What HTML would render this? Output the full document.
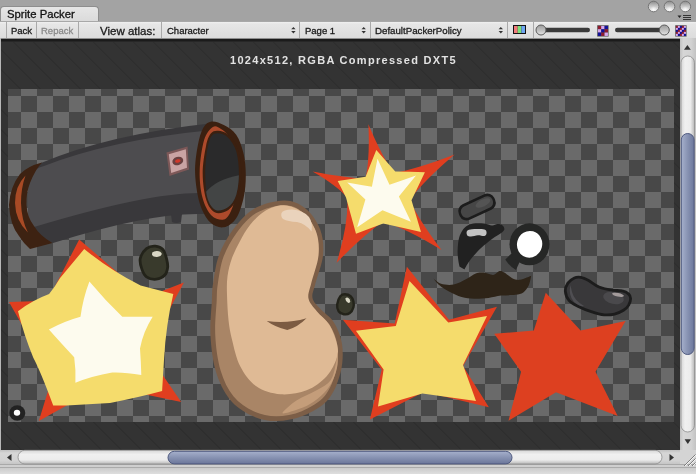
<!DOCTYPE html>
<html><head><meta charset="utf-8">
<style>
html,body{margin:0;padding:0;width:696px;height:474px;overflow:hidden;background:#a4a4a4;font-family:"Liberation Sans",sans-serif;}
.abs{position:absolute;}
.tt,#tabtxt{will-change:transform;}
#top{left:0;top:0;width:696px;height:21px;background:#a3a3a3;}
#tab{left:0;top:5.5px;width:99px;height:16.5px;background:linear-gradient(#e6e6e6,#dadada);border:1px solid #8e8e8e;border-bottom:none;border-radius:4px 4px 0 0;box-sizing:border-box;}
#tabtxt{left:7px;top:8px;font-size:11.3px;color:#111;-webkit-text-stroke:0.3px #111;}
#toolbar{left:0;top:21px;width:696px;height:17px;background:linear-gradient(#a8a8a8 0,#a8a8a8 1px,#f0f0f0 1px,#e6e6e6 3px,#dcdcdc 100%);box-sizing:border-box;}
.sep{position:absolute;top:22px;width:1px;height:16px;background:#a9a9a9;}
.tt{position:absolute;font-size:9.5px;color:#1a1a1a;white-space:nowrap;-webkit-text-stroke:0.3px currentColor;}
#content{left:0;top:38px;width:696px;height:436px;}
</style></head><body>
<div class="abs" id="top"></div>
<div class="abs" id="tab"></div>
<div class="abs" id="tabtxt">Sprite Packer</div>
<div class="abs" id="toolbar"></div>
<div class="sep" style="left:6px"></div>
<div class="sep" style="left:36px"></div>
<div class="sep" style="left:78px"></div>
<div class="sep" style="left:161px"></div>
<div class="sep" style="left:299px"></div>
<div class="sep" style="left:370px"></div>
<div class="sep" style="left:507px"></div>
<div class="sep" style="left:533px"></div>
<div class="tt" style="left:11px;top:25px;">Pack</div>
<div class="tt" style="left:41px;top:25px;color:#8a8a8a">Repack</div>
<div class="tt" style="left:100px;top:25px;font-size:11.5px;">View atlas:</div>
<div class="tt" style="left:167px;top:25px;">Character</div>
<div class="tt" style="left:305px;top:25px;">Page 1</div>
<div class="tt" style="left:375px;top:25px;font-size:9.7px;">DefaultPackerPolicy</div>


<svg class="abs" style="left:0;top:0" width="696" height="40" viewBox="0 0 696 40">
<defs>
<linearGradient id="btn" x1="0" y1="0" x2="0" y2="1"><stop offset="0" stop-color="#8a8a8a"/><stop offset="0.45" stop-color="#c4c4c4"/><stop offset="1" stop-color="#f6f6f6"/></linearGradient><radialGradient id="btnhl" cx="50%" cy="80%" r="50%"><stop offset="0" stop-color="#ffffff" stop-opacity="0.9"/><stop offset="1" stop-color="#ffffff" stop-opacity="0"/></radialGradient>
<linearGradient id="knob" x1="0" y1="0" x2="0" y2="1"><stop offset="0" stop-color="#9c9c9c"/><stop offset="0.6" stop-color="#c4c4c4"/><stop offset="1" stop-color="#e4e4e4"/></linearGradient>
</defs>
<g fill="#333">
<path d="M291.2 29.3 L293.4 27 L295.6 29.3 Z"/><path d="M291.2 31 L293.4 33.6 L295.6 31 Z"/>
<path d="M361.5 29.3 L363.7 27 L365.9 29.3 Z"/><path d="M361.5 31 L363.7 33.6 L365.9 31 Z"/>
<path d="M498.6 29.3 L500.8 27 L503 29.3 Z"/><path d="M498.6 31 L500.8 33.6 L503 31 Z"/>
</g>
<rect x="513" y="25" width="13" height="9" fill="#111"/>
<rect x="514" y="26" width="3.7" height="7" fill="#f07a7a"/>
<rect x="517.7" y="26" width="3.7" height="7" fill="#7de07a"/>
<rect x="521.4" y="26" width="3.6" height="7" fill="#6fa6f2"/>
<rect x="541" y="27.8" width="49" height="4.4" rx="2.2" fill="#3a3a3a"/>
<circle cx="541" cy="30" r="5" fill="url(#knob)" stroke="#5a5a5a" stroke-width="1"/>
<rect x="615" y="27.8" width="49" height="4.4" rx="2.2" fill="#3a3a3a"/>
<circle cx="664.3" cy="30" r="5" fill="url(#knob)" stroke="#5a5a5a" stroke-width="1"/>
<rect x="597.2" y="25.2" width="11.4" height="11.4" fill="#5a5a5a"/><rect x="597.90" y="25.90" width="3.35" height="3.35" fill="#8e1a2c"/><rect x="601.23" y="25.90" width="3.35" height="3.35" fill="#d6a6ee"/><rect x="604.57" y="25.90" width="3.35" height="3.35" fill="#12109a"/><rect x="597.90" y="29.23" width="3.35" height="3.35" fill="#d6a6ee"/><rect x="601.23" y="29.23" width="3.35" height="3.35" fill="#12109a"/><rect x="604.57" y="29.23" width="3.35" height="3.35" fill="#8e1a2c"/><rect x="597.90" y="32.57" width="3.35" height="3.35" fill="#12109a"/><rect x="601.23" y="32.57" width="3.35" height="3.35" fill="#8e1a2c"/><rect x="604.57" y="32.57" width="3.35" height="3.35" fill="#d6a6ee"/>
<rect x="675.2" y="25.2" width="11.4" height="11.4" fill="#5a5a5a"/><rect x="675.90" y="25.90" width="2.02" height="2.02" fill="#8e1a2c"/><rect x="677.90" y="25.90" width="2.02" height="2.02" fill="#d6a6ee"/><rect x="679.90" y="25.90" width="2.02" height="2.02" fill="#12109a"/><rect x="681.90" y="25.90" width="2.02" height="2.02" fill="#8e1a2c"/><rect x="683.90" y="25.90" width="2.02" height="2.02" fill="#d6a6ee"/><rect x="675.90" y="27.90" width="2.02" height="2.02" fill="#d6a6ee"/><rect x="677.90" y="27.90" width="2.02" height="2.02" fill="#12109a"/><rect x="679.90" y="27.90" width="2.02" height="2.02" fill="#8e1a2c"/><rect x="681.90" y="27.90" width="2.02" height="2.02" fill="#d6a6ee"/><rect x="683.90" y="27.90" width="2.02" height="2.02" fill="#12109a"/><rect x="675.90" y="29.90" width="2.02" height="2.02" fill="#12109a"/><rect x="677.90" y="29.90" width="2.02" height="2.02" fill="#8e1a2c"/><rect x="679.90" y="29.90" width="2.02" height="2.02" fill="#d6a6ee"/><rect x="681.90" y="29.90" width="2.02" height="2.02" fill="#12109a"/><rect x="683.90" y="29.90" width="2.02" height="2.02" fill="#8e1a2c"/><rect x="675.90" y="31.90" width="2.02" height="2.02" fill="#8e1a2c"/><rect x="677.90" y="31.90" width="2.02" height="2.02" fill="#d6a6ee"/><rect x="679.90" y="31.90" width="2.02" height="2.02" fill="#12109a"/><rect x="681.90" y="31.90" width="2.02" height="2.02" fill="#8e1a2c"/><rect x="683.90" y="31.90" width="2.02" height="2.02" fill="#d6a6ee"/><rect x="675.90" y="33.90" width="2.02" height="2.02" fill="#d6a6ee"/><rect x="677.90" y="33.90" width="2.02" height="2.02" fill="#12109a"/><rect x="679.90" y="33.90" width="2.02" height="2.02" fill="#8e1a2c"/><rect x="681.90" y="33.90" width="2.02" height="2.02" fill="#d6a6ee"/><rect x="683.90" y="33.90" width="2.02" height="2.02" fill="#12109a"/>
<circle cx="653.6" cy="6.5" r="5.3" fill="url(#btn)" stroke="#6e6e6e" stroke-width="0.9"/><circle cx="653.6" cy="7.5" r="3.5" fill="url(#btnhl)"/>
<circle cx="669.5" cy="6.5" r="5.3" fill="url(#btn)" stroke="#6e6e6e" stroke-width="0.9"/><circle cx="669.5" cy="7.5" r="3.5" fill="url(#btnhl)"/>
<circle cx="685.3" cy="6.5" r="5.3" fill="url(#btn)" stroke="#6e6e6e" stroke-width="0.9"/><circle cx="685.3" cy="7.5" r="3.5" fill="url(#btnhl)"/>
<path d="M677.5 15.5 L681.5 15.5 L679.5 18 Z" fill="#222"/>
<rect x="683" y="15" width="8" height="1" fill="#333"/>
<rect x="683" y="17" width="8" height="1" fill="#333"/>
<rect x="683" y="19" width="8" height="1" fill="#333"/>
</svg>
<svg class="abs" style="left:0;top:0" width="696" height="474" viewBox="0 0 696 474">
<defs>
<pattern id="chk" patternUnits="userSpaceOnUse" x="5" y="96" width="32" height="32">
<rect width="32" height="32" fill="#484848"/>
<rect width="16" height="16" fill="#6a6a6a"/>
<rect x="16" y="16" width="16" height="16" fill="#6a6a6a"/>
</pattern>
<pattern id="stripes" patternUnits="userSpaceOnUse" width="14.142" height="14.142" patternTransform="rotate(-45)">
<rect width="14.2" height="14.2" fill="#333"/>
<rect x="7.5" width="1" height="14.2" fill="#2c2c2c"/>
</pattern>
</defs>
<rect x="0" y="38" width="696" height="412" fill="#b8b8b8"/>
<rect x="1" y="39" width="679" height="411" fill="url(#stripes)"/>
<defs><linearGradient id="topsh" x1="0" y1="0" x2="0" y2="1"><stop offset="0" stop-color="#151515"/><stop offset="0.35" stop-color="#222" stop-opacity="0.7"/><stop offset="1" stop-color="#333" stop-opacity="0"/></linearGradient></defs><rect x="1" y="38" width="679" height="1" fill="#8e8e8e"/><rect x="1" y="39" width="679" height="2" fill="#1b1b1b"/><rect x="1" y="41" width="679" height="1" fill="#272727"/>
<rect x="8" y="89" width="666" height="333" fill="url(#chk)"/>
<!-- sprites -->
<g id="sprites">
<!-- cannon -->
<path d="M30 170 Q41 163 41 163 Q110 134 214 123 L204 214 Q150 212 53 243 L30 235 Z" fill="#39383b"/>
<path d="M28 175 Q36 168 44 166 Q110 140 212 130 L202 193 Q150 192 34 227 L28 222 Z" fill="#4d4c4f"/>
<path d="M171 214 L182 214 L181 222 Q176 224 172 222 Z" fill="#39383b"/>
<path d="M42 162.5 Q28 166 20 174 Q10 187 9 205 Q10 225 19 236 Q24 244 30 249 L52.5 243 Q40 236 34 226 Q27 217 26.5 205 Q26 193 30 183 Q35 170 42 162.5 Z" fill="#3d2212"/>
<path d="M25.5 175.5 Q15 186 15 203 Q15.5 221 27.9 232.4 Q21.5 220 21 203 Q21 188 25.5 175.5 Z" fill="#a84a25"/>
<path d="M211.5 121.5 C214.9 121.0 219.7 122.9 223.8 125.1 C227.9 127.3 232.9 129.9 236.2 134.7 C239.5 139.5 242.0 147.0 243.6 153.8 C245.2 160.7 245.8 168.5 245.8 175.8 C245.8 183.1 245.2 190.6 243.6 197.7 C242.0 204.8 239.5 213.3 236.2 218.2 C232.9 223.1 228.2 226.6 223.8 227.3 C219.5 228.0 214.1 226.3 210.1 222.3 C206.1 218.3 202.2 211.4 199.7 203.2 C197.2 195.0 195.4 182.6 195.1 173.0 C194.8 163.4 196.4 153.1 197.8 145.6 C199.2 138.1 201.0 131.8 203.3 127.8 C205.6 123.8 208.1 122.0 211.5 121.5 Z" fill="#3b2010"/>
<path d="M212.9 127.0 C215.7 125.2 218.3 127.3 221.0 129.0 C223.7 130.7 226.6 132.7 229.0 137.0 C231.4 141.3 234.1 148.7 235.5 155.0 C236.9 161.3 237.5 168.2 237.5 175.0 C237.5 181.8 236.6 190.0 235.5 196.0 C234.4 202.0 232.9 207.1 231.0 211.0 C229.1 214.9 227.1 218.8 223.8 219.6 C220.6 220.3 215.1 219.2 211.5 215.5 C207.9 211.8 204.5 205.2 202.5 197.7 C200.5 190.2 199.4 179.9 199.7 170.3 C200.0 160.7 201.9 147.3 204.1 140.1 C206.3 132.9 210.1 128.8 212.9 127.0 Z" fill="#ad4a2b"/>
<path d="M218.2 130.7 C221.1 130.9 225.2 131.8 228.4 134.9 C231.7 137.9 235.7 142.7 237.9 149.1 C240.0 155.5 241.5 165.5 241.4 173.5 C241.4 181.5 239.7 191.1 237.5 197.1 C235.3 203.2 232.1 207.3 228.4 209.9 C224.6 212.4 218.9 214.2 215.2 212.6 C211.6 210.9 208.4 206.5 206.3 200.0 C204.2 193.5 202.7 182.6 202.7 173.6 C202.6 164.6 204.6 152.9 206.0 146.2 C207.3 139.5 208.7 136.1 210.8 133.5 C212.8 130.9 215.3 130.5 218.2 130.7 Z" fill="#3b2010"/>
<clipPath id="mouthclip"><path d="M218.4 133.3 C221.1 133.5 224.9 134.4 227.9 137.4 C230.9 140.4 234.4 145.2 236.2 151.1 C238.0 157.0 238.9 165.7 238.9 173.0 C238.9 180.3 238.0 189.2 236.2 194.9 C234.4 200.6 231.3 204.8 227.9 207.3 C224.5 209.8 219.0 211.6 215.6 210.0 C212.2 208.4 209.1 203.9 207.4 197.7 C205.7 191.5 205.2 181.2 205.2 173.0 C205.2 164.8 206.3 154.6 207.4 148.4 C208.5 142.2 209.7 138.5 211.5 136.0 C213.3 133.5 215.7 133.1 218.4 133.3 Z"/></clipPath>
<path d="M218.4 133.3 C221.1 133.5 224.9 134.4 227.9 137.4 C230.9 140.4 234.4 145.2 236.2 151.1 C238.0 157.0 238.9 165.7 238.9 173.0 C238.9 180.3 238.0 189.2 236.2 194.9 C234.4 200.6 231.3 204.8 227.9 207.3 C224.5 209.8 219.0 211.6 215.6 210.0 C212.2 208.4 209.1 203.9 207.4 197.7 C205.7 191.5 205.2 181.2 205.2 173.0 C205.2 164.8 206.3 154.6 207.4 148.4 C208.5 142.2 209.7 138.5 211.5 136.0 C213.3 133.5 215.7 133.1 218.4 133.3 Z" fill="#2a2a2b"/>
<path d="M205 193 Q216 179 240 175 L240 215 L205 215 Z" fill="#434545" clip-path="url(#mouthclip)"/>
<path d="M166.5 152.5 L187.5 146.5 L189 169.5 L169.5 176 Z" fill="#7d5858"/>
<path d="M168.8 154.2 L185.8 149.3 L187 167.8 L171.2 173 Z" fill="#c9a3a3"/>
<ellipse cx="177.8" cy="161" rx="5.5" ry="4.2" transform="rotate(-15 177.8 161)" fill="#6a4040"/>
<ellipse cx="177.8" cy="161" rx="2.8" ry="1.7" transform="rotate(-15 177.8 161)" fill="#d0382a"/>

<!-- big explosion -->
<path d="M79.2 239.4 L146.2 297.2 L183.9 282.5 L146.7 351.7 L181.2 402.1 L102.6 385.5 L38.8 420.9 L52 378 L9 302.1 L47.5 300.8 Z" fill="#e03e1f"/>
<path d="M84.2 249 Q110 270 140.6 285.6 L173.3 294.1 Q166 325 164.1 358 L162.1 391 Q140 397 110 403 L66.5 405.4 L53.2 405.4 Q40 370 33.3 357.7 Q24 335 18 311.2 Q33 300 49.1 294.1 Q55 287 60.1 278.1 Z" fill="#f5dc6c"/>
<path d="M89.4 281.4 Q105 300 122.3 316.8 L152.7 316.8 Q143 332 140 348.5 Q141 362 141.3 375 Q125 372 112.2 372.5 Q92 376 75.4 382.7 Q76 370 74.2 357.3 Q60 342 48.9 329.5 Q65 321 80.5 316.8 Q83 298 89.4 281.4 Z" fill="#fdfbee"/>
<!-- dark blobs -->
<path d="M146.5 248.6 C149.0 246.6 152.5 245.9 155.3 246.1 C158.0 246.3 161.2 247.4 163.1 249.6 C165.0 251.8 165.9 256.5 166.7 259.4 C167.4 262.3 167.9 264.4 167.7 267.0 C167.4 269.5 166.9 272.8 165.0 274.8 C163.1 276.9 159.4 278.9 156.3 279.2 C153.2 279.5 148.9 278.5 146.5 276.8 C144.1 275.1 142.8 272.0 141.8 268.9 C140.7 265.8 139.5 261.7 140.3 258.3 C141.1 254.9 144.0 250.6 146.5 248.6 Z" fill="#393a2c" stroke="#23231a" stroke-width="2.8"/>
<path d="M152.2 252.5 Q154 250.8 157 250.9 Q161 251 161.8 253.8 Q161.5 256.5 157 256.9 Q153 257 152 255 Z" fill="#d9d7c5"/>
<path d="M340.5 296.1 C341.7 294.4 343.2 294.2 344.9 294.2 C346.6 294.2 349.2 294.9 350.6 296.1 C352.0 297.3 352.9 299.5 353.4 301.4 C353.8 303.3 354.0 305.4 353.4 307.3 C352.8 309.3 351.4 311.9 349.8 313.0 C348.2 314.2 345.7 314.5 343.8 314.2 C342.0 313.9 339.7 312.8 338.6 311.2 C337.5 309.5 336.9 306.9 337.2 304.4 C337.5 301.9 339.2 297.8 340.5 296.1 Z" fill="#393a2c" stroke="#23231a" stroke-width="2.4"/>
<path d="M345.3 298.5 Q346.5 297.2 348 297.8 Q350.3 299 350.3 301.8 Q349.8 303.2 348 302.8 Q345.5 301.5 345.3 298.5 Z" fill="#d9d7c5"/>
<ellipse cx="17.3" cy="413" rx="8" ry="7.8" fill="#222"/>
<ellipse cx="17" cy="412.7" rx="3.2" ry="3" fill="#fff"/>

<!-- bean -->
<path d="M283.9 200.5 C292.5 200.4 299.4 203.6 305.5 208.5 C311.6 213.4 317.4 222.0 320.3 229.8 C323.2 237.6 323.8 246.5 323.0 255.4 C322.2 264.3 317.2 276.1 315.5 283.2 C313.8 290.3 311.7 293.8 312.5 298.0 C313.3 302.2 316.6 304.6 320.2 308.7 C323.8 312.8 330.2 316.4 333.9 322.4 C337.5 328.3 341.0 336.2 342.1 344.4 C343.2 352.6 343.0 362.7 340.7 371.8 C338.4 380.9 334.6 391.9 328.4 399.2 C322.2 406.5 312.4 412.0 303.7 415.6 C295.0 419.2 285.0 421.1 276.3 421.1 C267.6 421.1 259.4 419.2 251.6 415.6 C243.8 412.0 235.6 406.5 229.7 399.2 C223.8 391.9 219.2 382.3 216.0 371.8 C212.8 361.3 211.2 348.1 210.5 336.1 C209.8 324.1 211.5 308.8 211.9 300.0 C212.3 291.2 211.9 290.6 213.1 283.2 C214.3 275.8 215.6 264.3 218.9 255.4 C222.2 246.5 227.1 237.6 232.9 229.8 C238.7 222.1 245.3 213.8 253.8 208.9 C262.3 204.0 275.3 200.6 283.9 200.5 Z" fill="#7c5e47"/>
<path d="M283.9 205.3 C291.7 205.2 297.2 207.9 302.5 212.2 C307.8 216.6 313.2 224.4 315.8 231.5 C318.4 238.6 319.0 246.5 318.2 255.0 C317.4 263.4 312.6 274.7 310.8 282.1 C309.1 289.4 306.8 293.9 307.8 298.9 C308.7 303.8 312.9 307.5 316.6 311.9 C320.3 316.2 326.3 319.4 329.8 324.9 C333.3 330.4 336.3 337.4 337.3 345.1 C338.4 352.7 338.1 362.1 336.0 370.6 C333.9 379.1 330.4 389.3 324.7 396.1 C319.0 402.9 309.9 407.8 301.8 411.2 C293.8 414.5 284.3 416.3 276.3 416.3 C268.3 416.3 260.8 414.6 253.6 411.3 C246.5 407.9 238.9 403.0 233.4 396.2 C227.9 389.4 223.6 380.5 220.6 370.4 C217.6 360.3 215.9 347.5 215.3 335.8 C214.6 324.1 216.3 308.9 216.7 300.2 C217.1 291.6 216.7 291.1 217.8 283.9 C219.0 276.7 220.3 265.6 223.4 257.1 C226.6 248.5 231.3 240.0 236.7 232.7 C242.2 225.3 248.3 217.6 256.2 213.1 C264.1 208.5 276.2 205.4 283.9 205.3 Z" fill="#a98566"/>
<path d="M283.9 205.3 C290.2 205.6 297.6 208.4 303.0 212.8 C308.4 217.2 313.4 224.4 316.0 231.5 C318.6 238.6 319.3 246.8 318.5 255.4 C317.7 264.0 313.0 275.8 311.3 283.0 C309.6 290.2 307.6 293.8 308.5 298.5 C309.4 303.2 313.5 307.1 317.0 311.5 C320.5 315.9 326.2 319.6 329.5 325.0 C332.8 330.4 335.8 338.5 337.0 344.0 C338.2 349.5 338.5 352.7 336.8 358.1 C335.1 363.5 331.7 370.8 326.7 376.2 C321.7 381.6 314.3 387.3 306.6 390.3 C298.9 393.3 288.8 395.0 280.4 394.3 C272.0 393.6 263.0 391.0 256.3 386.3 C249.6 381.6 244.2 373.9 240.2 366.2 C236.2 358.5 234.0 347.7 232.1 340.0 C230.2 332.3 229.3 327.5 228.5 320.0 C227.7 312.5 227.2 302.3 227.0 295.0 C226.8 287.7 226.7 282.5 227.5 276.3 C228.3 270.1 229.9 263.8 232.0 258.0 C234.1 252.2 236.8 246.9 239.8 241.4 C242.8 235.9 245.8 230.1 250.0 225.0 C254.2 219.9 259.4 214.3 265.0 211.0 C270.6 207.7 277.6 205.0 283.9 205.3 Z" fill="#dfba95"/>
<path d="M337.5 352.0 C337.8 352.1 338.2 360.3 337.5 365.0 C336.8 369.7 335.2 375.3 333.0 380.0 C330.8 384.7 327.8 389.0 324.0 393.0 C320.2 397.0 314.7 401.2 310.0 404.0 C305.3 406.8 300.6 408.5 296.0 410.0 C291.4 411.5 282.3 414.6 282.4 413.0 C282.5 411.4 290.8 404.2 296.5 400.4 C302.2 396.6 310.9 393.7 316.6 390.3 C322.3 386.9 327.5 384.6 330.7 380.2 C333.9 375.8 334.7 368.8 335.8 364.1 C336.9 359.4 337.2 351.9 337.5 352.0 Z" fill="#c49d7a"/>
<path d="M281.5 213 Q283 209.5 292 209.5 Q303 210 309 217 Q313 223 311.5 231.5 Q306 224 297 222 Q288 221.5 283 219 Q280.5 216.5 281.5 213 Z" fill="#ead3bc"/>
<path d="M266.7 321 Q287 324 306.5 318.3 Q298 327 287.3 330.1 Q275 327 266.7 321 Z" fill="#7c5b42"/>

<!-- top star -->
<path d="M368.4 124.2 Q381.9 156.6 394.0 173.0 Q418.0 168.8 454.6 154.6 Q424.6 180.1 409.5 200.0 Q419.1 220.3 441.6 250.1 Q407.9 229.2 383.0 221.5 Q363.6 235.0 336.6 262.7 Q348.2 225.3 347.5 198.0 Q337.9 186.2 312.6 171.5 Q346.4 178.2 365.5 178.5 Q370.0 158.7 368.4 124.2 Z" fill="#e03e1f"/>
<path d="M376.3 150.0 Q385.8 160.8 395.3 171.6 Q410.1 171.9 424.9 172.2 Q418.2 186.2 411.5 200.3 Q416.2 216.1 421.0 231.9 Q402.1 227.7 383.2 223.5 Q369.6 228.6 356.0 233.7 Q351.0 215.6 346.0 197.5 Q341.9 189.3 337.7 181.1 Q351.6 178.9 365.6 176.7 Q371.0 163.3 376.3 150.0 Z" fill="#f5dc6c"/>
<path d="M377.5 158.7 Q383.5 171.8 389.5 184.8 Q402.8 180.2 416.0 175.5 Q407.4 186.0 398.9 196.5 Q404.9 209.2 410.9 221.8 Q396.7 216.1 382.5 210.3 Q369.9 218.8 357.2 227.3 Q361.3 213.4 365.4 199.5 Q356.3 190.9 347.2 182.4 Q359.5 184.6 371.9 186.8 Q374.7 172.8 377.5 158.7 Z" fill="#fdfbee"/>

<!-- bottom star -->
<path d="M406.9 266.8 L449 319.7 L497 306.7 L463 365.9 L488.9 407.3 L424.2 391.7 L369.9 419.5 L381.7 369.6 L342.9 319.7 L394.7 323.4 Z" fill="#e03e1f"/>
<path d="M409.5 280.9 L448.3 322.6 L487 316 L463 365 L476 401 L422.4 393.6 L378 406.5 L383.6 369.6 L355.9 330.8 L395.8 326 Z" fill="#f5dc6c"/>

<!-- red star right -->
<path d="M545.8 292.7 L580.6 330.6 L625.6 321.1 L595.5 371.8 L617.7 416.1 L556 392.3 L508.5 420.8 L521.1 371.8 L494.2 333.8 L533.8 330.6 Z" fill="#dd4020"/>

<!-- pill -->
<rect x="457.5" y="198.5" width="39" height="17" rx="7.5" transform="rotate(-25 477 207)" fill="#1c1c1c"/>
<rect x="460" y="201" width="34" height="12" rx="5.5" transform="rotate(-25 477 207)" fill="#464646"/>
<ellipse cx="483" cy="203" rx="8" ry="3.5" transform="rotate(-25 483 203)" fill="#545454"/>
<!-- left eye -->
<path d="M473.3 223.5 C476.3 223.0 480.9 223.2 484.0 223.5 C487.1 223.8 489.8 225.4 492.0 225.5 C494.2 225.6 495.8 224.1 497.5 224.0 C499.2 223.9 500.9 224.2 502.0 225.0 C503.1 225.8 504.2 227.3 504.3 228.5 C504.4 229.7 504.6 230.2 502.5 232.0 C500.4 233.8 495.5 236.4 492.0 239.0 C488.5 241.6 484.8 244.6 481.6 247.5 C478.4 250.4 475.4 253.8 473.0 256.5 C470.6 259.2 468.9 261.8 467.5 264.0 C466.1 266.2 464.5 269.5 464.5 269.5 C464.5 269.5 459.5 266.5 459.5 266.5 C459.5 266.5 458.5 262.0 458.2 259.4 C457.9 256.8 457.5 254.2 457.6 251.0 C457.7 247.8 458.0 243.2 458.6 240.0 C459.2 236.8 460.3 234.2 461.5 232.0 C462.7 229.8 464.0 227.9 466.0 226.5 C468.0 225.1 470.3 224.0 473.3 223.5 Z" fill="#212121"/>
<path d="M467.0 231.0 C467.8 229.9 469.8 229.5 472.0 229.2 C474.2 228.9 477.8 228.9 480.0 229.0 C482.2 229.1 484.4 229.2 485.5 230.0 C486.6 230.8 486.7 232.5 486.5 233.5 C486.3 234.5 485.9 235.7 484.5 236.0 C483.1 236.3 480.2 235.2 478.0 235.3 C475.8 235.4 472.8 236.5 471.0 236.5 C469.2 236.5 468.0 236.4 467.3 235.5 C466.6 234.6 466.2 232.1 467.0 231.0 Z" fill="#c2c2c2"/>
<!-- right eye -->
<path d="M505.3 259.5 L512.5 252.5 L520 261 L516 270 Q510 267 505.3 259.5 Z" fill="#262726"/>
<ellipse cx="529.5" cy="244.3" rx="20" ry="21" fill="#262726"/>
<ellipse cx="529.6" cy="244.3" rx="12.6" ry="13.4" transform="rotate(15 529.6 244.3)" fill="#ffffff"/>
<!-- mustache -->
<path d="M433.2 278.2 C433.2 278.2 437.7 282.6 441.1 283.7 C444.5 284.8 449.5 285.3 453.7 284.5 C457.9 283.7 462.7 280.9 466.4 279.0 C470.1 277.1 472.9 274.5 475.8 273.4 C478.7 272.3 480.8 272.3 483.7 272.6 C486.6 272.9 490.6 275.2 493.2 275.0 C495.8 274.8 497.6 271.5 499.5 271.1 C501.4 270.7 502.2 271.4 504.3 272.6 C506.4 273.8 509.6 277.0 512.2 278.2 C514.8 279.4 516.9 280.2 520.1 279.8 C523.3 279.4 531.2 275.8 531.2 275.8 C531.2 275.8 530.1 282.5 528.8 285.3 C527.5 288.1 525.5 290.8 523.3 292.4 C521.0 294.0 519.0 294.3 515.3 294.8 C511.6 295.3 505.6 295.1 501.1 295.6 C496.6 296.1 493.0 297.4 488.5 297.9 C484.0 298.4 478.8 298.8 474.3 298.7 C469.8 298.6 465.8 298.3 461.6 297.1 C457.4 295.9 452.7 293.6 449.0 291.6 C445.3 289.6 442.1 287.5 439.5 285.3 C436.9 283.1 433.2 278.2 433.2 278.2 Z" fill="#2e2418"/>
<!-- dark bean -->
<path d="M565.3 290.9 C565.1 288.0 566.4 285.3 567.9 283.1 C569.4 280.9 572.2 278.9 574.4 277.9 C576.6 276.9 578.5 276.9 580.9 277.3 C583.3 277.7 585.6 278.9 588.6 280.5 C591.6 282.1 595.1 285.4 599.0 287.0 C602.9 288.6 608.0 289.6 611.9 290.2 C615.8 290.8 619.4 290.2 622.2 290.9 C625.0 291.5 627.3 292.8 628.7 294.1 C630.1 295.4 630.6 296.8 630.6 298.6 C630.6 300.4 629.9 303.2 628.7 305.1 C627.5 307.1 625.9 308.8 623.5 310.3 C621.1 311.8 617.7 313.4 614.5 314.1 C611.3 314.9 608.0 315.2 604.1 314.8 C600.2 314.4 595.5 313.0 591.2 311.6 C586.9 310.2 582.0 308.2 578.3 306.4 C574.6 304.6 571.4 303.2 569.2 300.6 C567.0 298.0 565.5 293.8 565.3 290.9 Z" fill="#39383a" stroke="#1c1c1c" stroke-width="2.8"/>
<path d="M570.5 285 Q568 295 574 302 Q580 307 584 306 Q574 300 572 292 Q571 288 570.5 285 Z" fill="#4f4e52"/>
<ellipse cx="613.5" cy="298" rx="10.5" ry="6" transform="rotate(12 613.5 298)" fill="#4a494c"/>
<ellipse cx="618" cy="294.8" rx="6" ry="1.8" transform="rotate(12 618 294.8)" fill="#a39b9b"/>
</g>
<!-- scrollbars -->
<defs>
<linearGradient id="vbg" x1="0" y1="0" x2="1" y2="0"><stop offset="0" stop-color="#c0c0c0"/><stop offset="0.2" stop-color="#d6d6d6"/><stop offset="0.7" stop-color="#d2d2d2"/><stop offset="1" stop-color="#c2c2c2"/></linearGradient>
<linearGradient id="hbg" x1="0" y1="0" x2="0" y2="1"><stop offset="0" stop-color="#c0c0c0"/><stop offset="0.2" stop-color="#d6d6d6"/><stop offset="0.7" stop-color="#d2d2d2"/><stop offset="1" stop-color="#c2c2c2"/></linearGradient>
<linearGradient id="vtrack" x1="0" y1="0" x2="1" y2="0"><stop offset="0" stop-color="#d6d6d6"/><stop offset="0.3" stop-color="#f0f0f0"/><stop offset="0.7" stop-color="#ececec"/><stop offset="1" stop-color="#b8b8b8"/></linearGradient>
<linearGradient id="htrack" x1="0" y1="0" x2="0" y2="1"><stop offset="0" stop-color="#d6d6d6"/><stop offset="0.3" stop-color="#f0f0f0"/><stop offset="0.7" stop-color="#ececec"/><stop offset="1" stop-color="#b8b8b8"/></linearGradient>
<linearGradient id="vthumb" x1="0" y1="0" x2="1" y2="0"><stop offset="0" stop-color="#a6b0cc"/><stop offset="0.5" stop-color="#8792b2"/><stop offset="1" stop-color="#6b769a"/></linearGradient>
<linearGradient id="hthumb" x1="0" y1="0" x2="0" y2="1"><stop offset="0" stop-color="#a6b0cc"/><stop offset="0.5" stop-color="#8792b2"/><stop offset="1" stop-color="#6b769a"/></linearGradient>
<linearGradient id="bottomedge" x1="0" y1="0" x2="0" y2="1"><stop offset="0" stop-color="#c4c4c4"/><stop offset="0.4" stop-color="#cbcbcb"/><stop offset="1" stop-color="#dedede"/></linearGradient>
</defs>
<rect x="680" y="38" width="16" height="412" fill="url(#vbg)"/>
<rect x="0" y="450" width="680" height="15" fill="url(#hbg)"/>
<rect x="680" y="450" width="16" height="15" fill="#d4d4d4"/>
<rect x="0" y="464" width="696" height="10" fill="url(#bottomedge)"/><rect x="0" y="464" width="696" height="1" fill="#a9a9a9"/><rect x="0" y="465" width="696" height="2" fill="#cfcfcf"/><rect x="0" y="467" width="696" height="1" fill="#ababab"/>
<rect x="681" y="56" width="13.5" height="376" rx="6.75" fill="url(#vtrack)" stroke="#8e8e8e" stroke-width="0.8"/>
<rect x="18" y="450.3" width="644" height="13.7" rx="6.85" fill="url(#htrack)" stroke="#8e8e8e" stroke-width="0.8"/>
<rect x="681.3" y="133.5" width="12.8" height="221" rx="6.4" fill="url(#vthumb)" stroke="#4f5a80" stroke-width="1"/>
<rect x="168" y="451.3" width="344" height="12.6" rx="6.3" fill="url(#hthumb)" stroke="#4f5a80" stroke-width="1"/>
<path d="M684 49.7 L687.4 44.9 L690.8 49.7 Z" fill="#333"/>
<path d="M684.6 439.2 L687.8 444 L691 439.2 Z" fill="#333"/>
<path d="M11.5 454 L7 457.5 L11.5 461 Z" fill="#333"/>
<path d="M669.5 454 L674 457.5 L669.5 461 Z" fill="#333"/>
<g stroke="#f4f4f4" stroke-width="1"><path d="M685 466 L696 455"/><path d="M689 466 L696 459"/><path d="M693 466 L696 463"/></g><g stroke="#7e7e7e" stroke-width="1"><path d="M684 466 L695.5 454.5"/><path d="M688 466 L695.5 458.5"/><path d="M692 466 L695.5 462.5"/></g>
</svg>
<div class="tt" style="left:230px;top:54px;font-size:11px;font-weight:bold;color:#e2e2e2;letter-spacing:1.3px;-webkit-text-stroke:0">1024x512, RGBA Compressed DXT5</div>
</body></html>
